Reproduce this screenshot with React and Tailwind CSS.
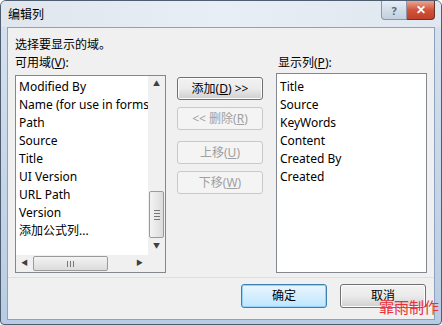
import React from "react";

const font = { fontFamily: '"Noto Sans", "Noto Sans CJK SC", sans-serif' };

function Btn({ children, disabled, primary, className = "" }) {
  return (
    <div
      className={
        "flex h-[23px] items-center justify-center rounded-[3px] border text-[12px] " +
        (disabled
          ? "border-[#c9c9c9] bg-[#f4f4f4] text-[#a0a0a0] "
          : primary
          ? "border-[#3c7fb1] bg-gradient-to-b from-[#eaf6fd] to-[#bee6fd] text-black shadow-[inset_0_0_0_1px_#94d3f8] "
          : "border-[#707070] bg-gradient-to-b from-[#f2f2f2] via-[#ebebeb] to-[#cfcfcf] text-black shadow-[inset_0_0_0_1px_#fcfcfc] ") +
        className
      }
    >
      {children}
    </div>
  );
}

const left = [
  "Modified By",
  "Name (for use in forms)",
  "Path",
  "Source",
  "Title",
  "UI Version",
  "URL Path",
  "Version",
  "添加公式列...",
];
const right = ["Title", "Source", "KeyWords", "Content", "Created By", "Created"];

export default function App() {
  return (
    <div
      className="relative flex h-[325px] w-[442px] flex-col overflow-hidden rounded-t-[6px] rounded-b-[4px] border border-[#4e5d70] bg-gradient-to-b from-[#d7e2ee] to-[#b7cce4]"
      style={font}
    >
      {/* Title bar */}
      <div className="flex h-[26px] shrink-0 items-start bg-gradient-to-r from-[#dfe6ee] via-[#e8eef5] to-[#dfe7f0]">
        <div className="pl-[7px] pt-[6px] text-[12px] leading-[16px] text-black">编辑列</div>
        <div className="ml-auto mr-[6px] flex">
          <div className="flex h-[19px] w-[26px] items-center justify-center rounded-bl-[4px] border border-t-0 border-[#8a97a8] bg-gradient-to-b from-[#e6edf5] to-[#c2cfdd] text-[11px] font-bold leading-none text-[#59697b]">
            ?
          </div>
          <div className="flex h-[19px] w-[28px] items-center justify-center rounded-br-[4px] border border-t-0 border-l-0 border-[#6d3126] bg-gradient-to-b from-[#e8a493] via-[#d0533a] to-[#c0402a] text-[12px] font-bold leading-none text-white">
            ✕
          </div>
        </div>
      </div>

      {/* Client */}
      <div className="mx-[6px] mb-[6px] flex flex-1 flex-col border border-[#8ea3bb] bg-[#f0f0f0]">
        <div className="flex flex-1 flex-col bg-white/0 px-[7px] pt-[8px]">
          <div className="text-[12px] leading-[18px] text-black">选择要显示的域。</div>
          <div className="mt-0 flex">
            {/* left column */}
            <div className="flex w-[151px] flex-col">
              <div className="text-[12px] leading-[18px] text-black">
                可用域(<span className="underline">V</span>):
              </div>
              <div className="mt-[3px] flex h-[198px] flex-col border border-[#828790] bg-white">
                <div className="flex min-h-0 flex-1">
                  <div className="flex-1 overflow-hidden pl-[3px] pt-[2px]">
                    {left.map((t) => (
                      <div key={t} className="whitespace-nowrap text-[12px] leading-[18px] text-black">
                        {t}
                      </div>
                    ))}
                  </div>
                  {/* vertical scrollbar */}
                  <div className="flex w-[17px] flex-col bg-[#f0f0f0]">
                    <div className="flex h-[17px] items-center justify-center text-[7px] text-[#404040]">▲</div>
                    <div className="flex-1" />
                    <div className="mx-[1px] flex h-[47px] flex-col items-center justify-center gap-[2px] rounded-[2px] border border-[#9a9a9a] bg-gradient-to-r from-[#f3f3f3] to-[#dcdcdc]">
                      <div className="h-px w-[6px] bg-[#777]" />
                      <div className="h-px w-[6px] bg-[#777]" />
                      <div className="h-px w-[6px] bg-[#777]" />
                      <div className="h-px w-[6px] bg-[#777]" />
                    </div>
                    <div className="flex h-[17px] items-center justify-center text-[7px] text-[#404040]">▼</div>
                  </div>
                </div>
                {/* horizontal scrollbar */}
                <div className="flex h-[17px] shrink-0">
                  <div className="flex flex-1 items-center bg-[#f0f0f0]">
                    <div className="flex w-[17px] justify-center text-[7px] text-[#404040]">◀</div>
                    <div className="flex h-[15px] w-[75px] items-center justify-center gap-[2px] rounded-[2px] border border-[#9a9a9a] bg-gradient-to-b from-[#f3f3f3] to-[#dcdcdc]">
                      <div className="h-[6px] w-px bg-[#777]" />
                      <div className="h-[6px] w-px bg-[#777]" />
                      <div className="h-[6px] w-px bg-[#777]" />
                    </div>
                    <div className="flex-1" />
                    <div className="flex w-[17px] justify-center text-[7px] text-[#404040]">▶</div>
                  </div>
                  <div className="w-[17px] bg-[#f0f0f0]" />
                </div>
              </div>
            </div>

            {/* middle buttons */}
            <div className="ml-[11px] flex w-[86px] flex-col pt-[23px]">
              <Btn>
                添加(<span className="underline">D</span>)&nbsp;&gt;&gt;
              </Btn>
              <Btn disabled className="mt-[7px]">
                &lt;&lt; 删除(<span className="underline">R</span>)
              </Btn>
              <Btn disabled className="mt-[11px]">
                上移(<span className="underline">U</span>)
              </Btn>
              <Btn disabled className="mt-[7px]">
                下移(<span className="underline">W</span>)
              </Btn>
            </div>

            {/* right column */}
            <div className="ml-[13px] flex w-[151px] flex-col">
              <div className="pl-[2px] text-[12px] leading-[18px] text-black">
                显示列(<span className="underline">P</span>):
              </div>
              <div className="mt-[1px] h-[200px] border border-[#828790] bg-white pl-[3px] pt-[4px]">
                {right.map((t) => (
                  <div key={t} className="whitespace-nowrap text-[12px] leading-[18px] text-black">
                    {t}
                  </div>
                ))}
              </div>
            </div>
          </div>
        </div>
        <div className="mt-[4px] h-px bg-[#dfdfdf]" />
        <div className="flex h-[41px] shrink-0 items-start justify-end gap-[13px] pr-[8px] pt-[6px]">
          <Btn primary className="w-[86px] !h-[24px]">确定</Btn>
          <Btn className="w-[86px] !h-[24px]">取消</Btn>
        </div>
      </div>

      <div className="absolute left-[378px] top-[297px] text-[15px] leading-[18px] text-[#e8323a]">霏雨制作</div>
    </div>
  );
}
